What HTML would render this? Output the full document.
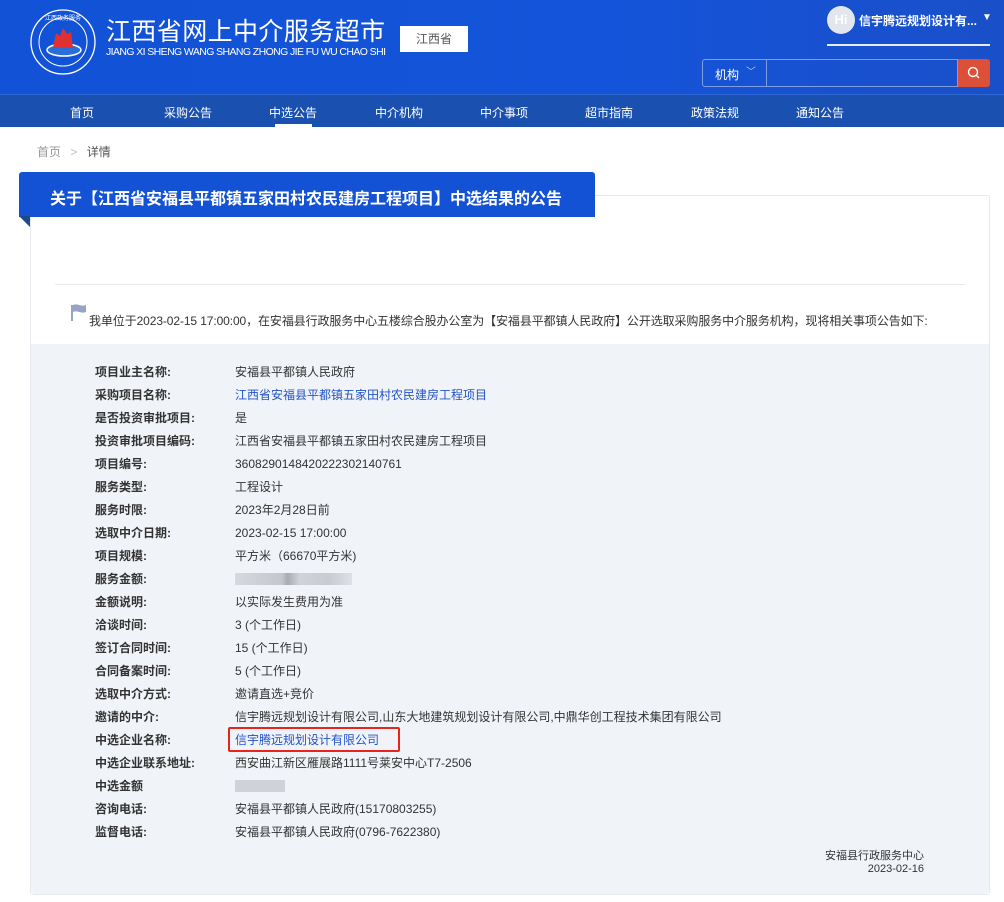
<!DOCTYPE html>
<html><head><meta charset="utf-8"><style>
*{margin:0;padding:0;box-sizing:border-box}
body{width:1004px;height:902px;background:#fff;font-family:"Liberation Sans","Noto Sans CJK SC",sans-serif;font-size:12px;color:#333;position:relative;overflow:hidden}
.hd{position:absolute;left:0;top:0;width:1004px;height:94px;background:linear-gradient(90deg,#1252d6,#1454da 60%,#1a4fc9)}
.nav{position:absolute;left:0;top:94px;width:1004px;height:33px;background:#1a50b0;border-top:1px solid #2f68d0}
.nav span{position:absolute;top:9px;color:#fff;font-size:12px;transform:translateX(-50%)}
.abs{position:absolute}
.row{position:absolute;left:95px;font-size:12px;line-height:14px}
.lab{font-weight:bold;color:#333}
.val{position:absolute;left:140px;white-space:nowrap;color:#333}
.blue{color:#2254c8}
</style></head><body>
<div class="hd"></div>
<svg class="abs" style="left:29px;top:8px" width="68" height="68" viewBox="0 0 68 68">
<circle cx="34" cy="34" r="32" fill="none" stroke="#fff" stroke-width="1.3"/>
<circle cx="34" cy="34" r="24" fill="none" stroke="#fff" stroke-width="1"/>
<ellipse cx="35" cy="42" rx="17" ry="6" fill="#2a6fd8" stroke="#fff" stroke-width="1.5"/>
<path d="M24 40 L27 25 L31 28 L34 20 L38 26 L42 24 L44 40 Z" fill="#e03030"/>
<text x="34" y="12" fill="#fff" font-size="6" text-anchor="middle">江西政务服务</text>
</svg>
<div class="abs" style="left:106px;top:18px;color:#fff;font-size:25px;letter-spacing:0.4px;line-height:28px">江西省网上中介服务超市</div>
<div class="abs" style="left:106px;top:46px;color:#fff;font-size:10.5px;letter-spacing:-0.6px;white-space:nowrap">JIANG XI SHENG WANG SHANG ZHONG JIE FU WU CHAO SHI</div>
<div class="abs" style="left:400px;top:26px;width:68px;height:26px;background:#fff;color:#555;font-size:12px;text-align:center;line-height:26px">江西省</div>
<div class="abs" style="left:827px;top:6px;width:28px;height:28px;border-radius:50%;background:#e4e6ee;color:#fff;font-weight:bold;font-size:13px;text-align:center;line-height:28px">Hi</div>
<div class="abs" style="left:859px;top:12px;color:#fff;font-weight:bold;font-size:12px">信宇腾远规划设计有...</div>
<div class="abs" style="left:982px;top:12px;color:#fff;font-size:10px">▼</div>
<div class="abs" style="left:827px;top:44px;width:163px;height:2px;background:#e8ecf5"></div>
<div class="abs" style="left:702px;top:59px;width:256px;height:28px;border:1px solid #7d9fe0;border-radius:3px 0 0 3px"></div>
<div class="abs" style="left:766px;top:59px;width:1px;height:28px;background:#7d9fe0"></div>
<div class="abs" style="left:715px;top:66px;color:#fff;font-size:12px">机构</div>
<div class="abs" style="left:746px;top:63px;color:#b8c8ee;font-size:10px">﹀</div>
<div class="abs" style="left:958px;top:59px;width:32px;height:28px;background:#dc4f38;border-radius:0 3px 3px 0"></div>
<svg class="abs" style="left:967px;top:66px" width="14" height="14"><circle cx="6" cy="6" r="4.5" fill="none" stroke="#fff" stroke-width="1.4"/><path d="M9.3 9.3L12 12" stroke="#fff" stroke-width="1.4"/></svg>
<div class="nav">
<span style="left:82px">首页</span><span style="left:188px">采购公告</span><span style="left:293px">中选公告</span><span style="left:399px">中介机构</span><span style="left:504px">中介事项</span><span style="left:609px">超市指南</span><span style="left:715px">政策法规</span><span style="left:820px">通知公告</span>
<div class="abs" style="left:275px;top:29px;width:37px;height:3px;background:#fff"></div>
</div>
<div class="abs" style="left:37px;top:143px;color:#999">首页 <span style="color:#bbb;margin:0 6px">&gt;</span> <span style="color:#555">详情</span></div>
<div class="abs" style="left:30px;top:195px;width:960px;height:700px;border:1px solid #e6e8ee;background:#fff;border-radius:3px"></div>
<div class="abs" style="left:31px;top:344px;width:958px;height:550px;background:#f0f3f8;border-radius:0 0 4px 4px"></div>
<div class="abs" style="left:19px;top:172px;width:576px;height:45px;background:#1352d4;border-radius:3px 3px 0 0"></div>
<div class="abs" style="left:19px;top:216px;width:0;height:0;border-top:11px solid #1d4b8a;border-left:11px solid transparent"></div>
<div class="abs" style="left:50px;top:185px;color:#fff;font-weight:bold;font-size:16px;white-space:nowrap">关于【江西省安福县平都镇五家田村农民建房工程项目】中选结果的公告</div>
<div class="abs" style="left:55px;top:284px;width:910px;height:1px;background:#e8eaee"></div>
<svg class="abs" style="left:70px;top:303px" width="18" height="20"><path d="M2 2v16" stroke="#95a6c4" stroke-width="2"/><path d="M3 2c4-2 8 2 13 0v7c-5 2-9-2-13 0z" fill="#95a6c4"/></svg>
<div class="abs" style="left:89px;top:312px;color:#333;white-space:nowrap;letter-spacing:-0.1px">我单位于2023-02-15 17:00:00，在安福县行政服务中心五楼综合股办公室为【安福县平都镇人民政府】公开选取采购服务中介服务机构，现将相关事项公告如下:</div>

<div class="row" style="top:365px"><span class="lab">项目业主名称:</span><span class="val">安福县平都镇人民政府</span></div>
<div class="row" style="top:388px"><span class="lab">采购项目名称:</span><span class="val blue">江西省安福县平都镇五家田村农民建房工程项目</span></div>
<div class="row" style="top:411px"><span class="lab">是否投资审批项目:</span><span class="val">是</span></div>
<div class="row" style="top:434px"><span class="lab">投资审批项目编码:</span><span class="val">江西省安福县平都镇五家田村农民建房工程项目</span></div>
<div class="row" style="top:457px"><span class="lab">项目编号:</span><span class="val">360829014842022230214076​1</span></div>
<div class="row" style="top:480px"><span class="lab">服务类型:</span><span class="val">工程设计</span></div>
<div class="row" style="top:503px"><span class="lab">服务时限:</span><span class="val">2023年2月28日前</span></div>
<div class="row" style="top:526px"><span class="lab">选取中介日期:</span><span class="val">2023-02-15 17:00:00</span></div>
<div class="row" style="top:549px"><span class="lab">项目规模:</span><span class="val">平方米（66670平方米)</span></div>
<div class="row" style="top:572px"><span class="lab">服务金额:</span><span class="val" style="top:1px;width:117px;height:12px;background:linear-gradient(90deg,#d6d9df,#c4c7ce 40%,#a8abb2 45%,#d0d3d9 55%,#c8cbd1 80%,#dde0e5)"></span></div>
<div class="row" style="top:595px"><span class="lab">金额说明:</span><span class="val">以实际发生费用为准</span></div>
<div class="row" style="top:618px"><span class="lab">洽谈时间:</span><span class="val">3 (个工作日)</span></div>
<div class="row" style="top:641px"><span class="lab">签订合同时间:</span><span class="val">15 (个工作日)</span></div>
<div class="row" style="top:664px"><span class="lab">合同备案时间:</span><span class="val">5 (个工作日)</span></div>
<div class="row" style="top:687px"><span class="lab">选取中介方式:</span><span class="val">邀请直选+竞价</span></div>
<div class="row" style="top:710px"><span class="lab">邀请的中介:</span><span class="val">信宇腾远规划设计有限公司,山东大地建筑规划设计有限公司,中鼎华创工程技术集团有限公司</span></div>
<div class="row" style="top:733px"><span class="lab">中选企业名称:</span><span class="val blue">信宇腾远规划设计有限公司</span></div>
<div class="abs" style="left:228px;top:727px;width:172px;height:25px;border:2px solid #e8241c;border-radius:2px"></div>
<div class="row" style="top:756px"><span class="lab">中选企业联系地址:</span><span class="val">西安曲江新区雁展路1111号莱安中心T7-2506</span></div>
<div class="row" style="top:779px"><span class="lab">中选金额</span><span class="val" style="top:1px;width:50px;height:12px;background:#cfd2d8"></span></div>
<div class="row" style="top:802px"><span class="lab">咨询电话:</span><span class="val">安福县平都镇人民政府(15170803255)</span></div>
<div class="row" style="top:825px"><span class="lab">监督电话:</span><span class="val">安福县平都镇人民政府(0796-7622380)</span></div>
<div class="abs" style="right:80px;top:850px;text-align:right;line-height:13px;font-size:11px;color:#333">安福县行政服务中心<br>2023-02-16</div>
</body></html>
